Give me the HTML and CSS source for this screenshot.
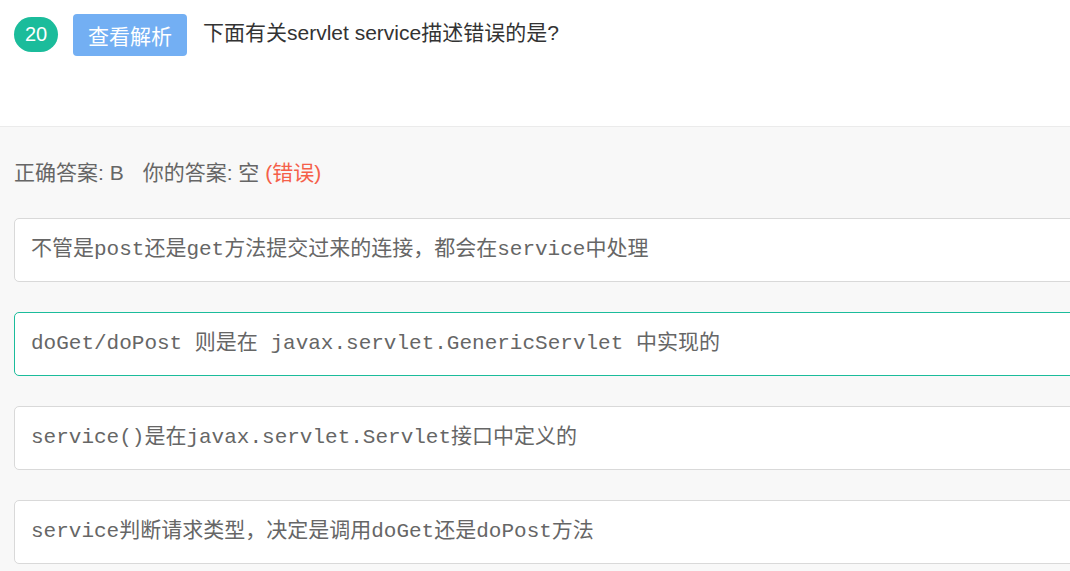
FILE: index.html
```html
<!DOCTYPE html>
<html lang="zh-CN">
<head>
<meta charset="utf-8">
<title>题目 20</title>
<link rel="stylesheet" href="styles.css">
</head>
<body>
<div class="page">
  <header class="question">
    <span class="num">20</span>
    <button class="analysis" type="button">查看解析</button>
    <h2 class="title">下面有关servlet service描述错误的是?</h2>
  </header>
  <section class="answers">
    <p class="result">正确答案: B<span class="sep"></span>你的答案: 空 <span class="wrong">(错误)</span></p>
    <ul class="options">
      <li class="option">不管是post还是get方法提交过来的连接，都会在service中处理</li>
      <li class="option correct">doGet/doPost 则是在 javax.servlet.GenericServlet 中实现的</li>
      <li class="option">service()是在javax.servlet.Servlet接口中定义的</li>
      <li class="option">service判断请求类型，决定是调用doGet还是doPost方法</li>
    </ul>
  </section>
</div>
</body>
</html>
```

FILE: styles.css
```css
* { box-sizing: border-box; }
html, body {
  margin: 0;
  padding: 0;
  height: 100%;
  overflow: hidden;
  background: #f8f8f8;
}
.page {
  font-family: "Liberation Sans", "Noto Sans CJK SC", sans-serif;
  min-height: 100%;
}
.question {
  display: flex;
  align-items: flex-start;
  height: 127px;
  padding: 14px 0 0 14px;
  background: #fff;
  border-bottom: 1px solid #ebebeb;
}
.num {
  margin-top: 3px;
  width: 44px;
  height: 35px;
  border-radius: 18px;
  background: #1bbc9b;
  color: #fff;
  font-size: 20px;
  line-height: 35px;
  text-align: center;
}
.analysis {
  margin-left: 15px;
  width: 114px;
  height: 42px;
  padding: 0;
  border: 0;
  border-radius: 4px;
  background: #73aff3;
  color: #fff;
  font-family: "Noto Sans CJK SC", sans-serif;
  font-size: 21px;
  line-height: 42px;
  text-align: center;
}
.title {
  margin: 3px 0 0 16px;
  font-size: 21px;
  font-weight: normal;
  line-height: 32px;
  color: #333;
}
.answers {
  padding: 31px 0 0 14px;
}
.result {
  margin: 0;
  font-size: 21px;
  line-height: 30px;
  color: #666;
}
.sep {
  display: inline-block;
  width: 19px;
}
.wrong { color: #f5604a; }
.options {
  list-style: none;
  margin: 30px -40px 0 0;
  padding: 0;
  display: flex;
  flex-direction: column;
  gap: 30px;
}
.option {
  padding: 16px 16px;
  border: 1px solid #d9d9d9;
  border-radius: 5px;
  background: #fff;
  font-family: "Liberation Mono", "Noto Sans CJK SC", monospace;
  font-size: 21px;
  line-height: 30px;
  color: #666;
  white-space: nowrap;
}
.option.correct { border-color: #1bbc9b; }
```
